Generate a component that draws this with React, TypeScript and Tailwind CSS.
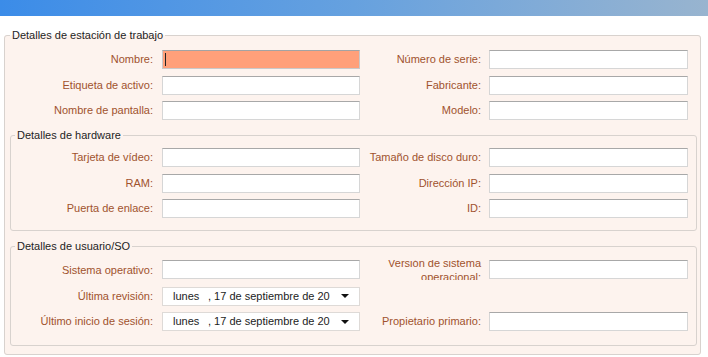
import React from "react";

const font = { fontFamily: '"Liberation Sans", Arial, sans-serif' };

function Field({ active }: { active?: boolean }) {
  if (active) {
    return (
      <div className="relative h-[19px] border border-[#c9c9c9] border-t-[#a3a3a3] bg-[#ffa07a]">
        <span className="absolute left-[2px] top-[2px] h-[13px] w-px bg-[#222]" />
      </div>
    );
  }
  return <div className="h-[19px] border border-[#d6d6d6] border-t-[#a8a8a8] bg-white" />;
}

function DateBox() {
  return (
    <div className="flex h-[19px] items-center border border-[#dedad7] bg-white pl-[10px] pr-[10px] text-[11px] text-[#1c1c1c]">
      <span className="w-[35px]">lunes</span>
      <span>, 17 de septiembre de 20</span>
      <svg className="ml-auto" width="8" height="4" viewBox="0 0 8 4">
        <path d="M0 0h8L4 4z" fill="#111" />
      </svg>
    </div>
  );
}

function Label({ text, right }: { text: string; right?: boolean }) {
  return (
    <div
      className={`flex items-center justify-end whitespace-nowrap text-[11px] text-[#a0522d] ${
        right ? "pr-[8px]" : "pr-[9px]"
      }`}
    >
      {text}
    </div>
  );
}

function GroupBox({ title, children }: { title: string; children: React.ReactNode }) {
  return (
    <fieldset className="ml-[5px] w-[687px] min-w-0 rounded-[3px] border border-[#d8d2ce] bg-[#fdf3ee]">
      <legend className="ml-[4px] px-[2px] text-[11px] leading-[14px] text-[#1e1e1e]">{title}</legend>
      {children}
    </fieldset>
  );
}

export default function App() {
  return (
    <div className="h-[357px] w-[708px] overflow-hidden bg-white" style={font}>
      {/* Title strip */}
      <div className="h-[16px] bg-gradient-to-r from-[#3b8ce8] via-[#66a1df] to-[#98b4cf]" />

      <fieldset className="ml-[4px] mt-[12px] w-[697px] min-w-0 rounded-[3px] border border-[#d8d2ce] bg-[#fdf3ee] pb-[8px]">
        <legend className="ml-[5px] px-[2px] text-[11px] leading-[14px] text-[#1e1e1e]">
          Detalles de estación de trabajo
        </legend>

        {/* Workstation rows */}
        <div className="ml-[5px] grid grid-cols-[152px_198px_129px_199px] gap-y-[6.5px] pt-[8px]">
          <Label text="Nombre:" />
          <Field active />
          <Label text="Número de serie:" right />
          <Field />

          <Label text="Etiqueta de activo:" />
          <Field />
          <Label text="Fabricante:" right />
          <Field />

          <Label text="Nombre de pantalla:" />
          <Field />
          <Label text="Modelo:" right />
          <Field />
        </div>

        <div className="mt-[8px]">
          <GroupBox title="Detalles de hardware">
            <div className="grid grid-cols-[151px_198px_129px_199px] gap-y-[6.5px] pb-[12px] pt-[6px]">
              <Label text="Tarjeta de vídeo:" />
              <Field />
              <Label text="Tamaño de disco duro:" right />
              <Field />

              <Label text="RAM:" />
              <Field />
              <Label text="Dirección IP:" right />
              <Field />

              <Label text="Puerta de enlace:" />
              <Field />
              <Label text="ID:" right />
              <Field />
            </div>
          </GroupBox>
        </div>

        <div className="mt-[8px]">
          <GroupBox title="Detalles de usuario/SO">
            <div className="grid grid-cols-[151px_198px_129px_199px] gap-y-[6.5px] pb-[14px] pt-[7px]">
              <Label text="Sistema operativo:" />
              <Field />
              {/* two-line label clipped to the row, as in the source form */}
              <div className="h-[20px] overflow-hidden pr-[8px] text-right text-[11px] text-[#a0522d]">
                <div className="-mt-[3px] leading-[13.5px]">
                  Versión de sistema
                  <br />
                  operacional:
                </div>
              </div>
              <Field />

              <Label text="Última revisión:" />
              <DateBox />
              <div />
              <div />

              <Label text="Último inicio de sesión:" />
              <DateBox />
              <Label text="Propietario primario:" right />
              <Field />
            </div>
          </GroupBox>
        </div>
      </fieldset>
    </div>
  );
}
